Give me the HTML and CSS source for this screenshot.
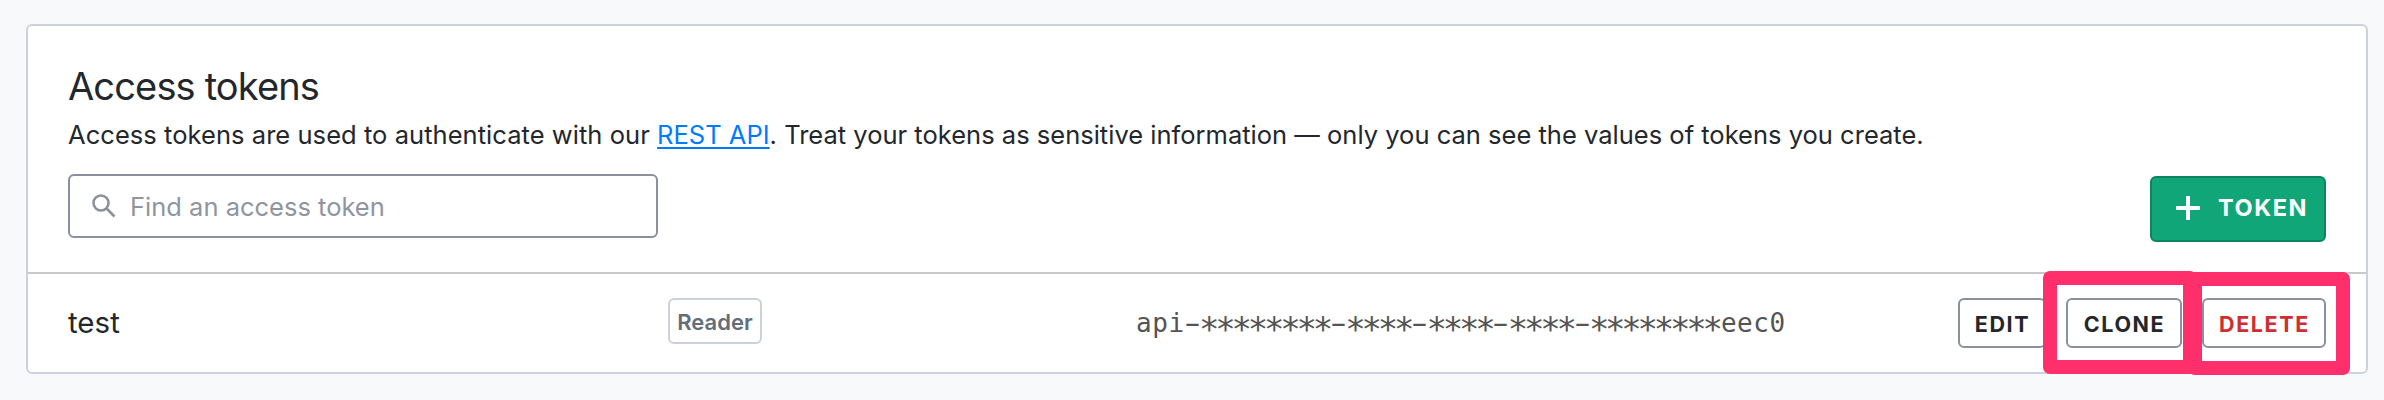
FILE: index.html
```html
<!DOCTYPE html>
<html lang="en">
<head>
<meta charset="utf-8">
<title>Access tokens</title>
<link rel="stylesheet" href="styles.css">
</head>
<body>
<main class="card">
  <section class="head">
    <h1 class="title">Access tokens</h1>
    <p class="desc"><span class="lead">Access tokens are used to authenticate with our </span><a class="link" href="#">REST API</a>. Treat your tokens as sensitive information — only you can see the values of tokens you create.</p>
    <div class="toolbar">
      <div class="search">
        <svg class="search-icon" viewBox="0 0 24 24"><circle cx="9" cy="9" r="7.5" /><path d="M14.5 14.5l8 8" /></svg>
        <span class="placeholder">Find an access token</span>
      </div>
      <button class="create">
        <svg class="plus" viewBox="0 0 24 24"><path d="M12 0v24M0 12h24" /></svg>
        <span class="create-label">TOKEN</span>
      </button>
    </div>
  </section>
  <section class="row">
    <div class="name">test</div>
    <div class="role"><span class="badge">Reader</span></div>
    <div class="value">api<span class="dash">-</span><span class="mask">********</span><span class="dash">-</span><span class="mask">****</span><span class="dash">-</span><span class="mask">****</span><span class="dash">-</span><span class="mask">****</span><span class="dash">-</span><span class="mask">********</span>eec0</div>
    <div class="actions">
      <button class="btn edit">EDIT</button>
      <div class="slot"><button class="btn clone">CLONE</button><i class="mark mark-clone"></i></div>
      <div class="slot"><button class="btn delete">DELETE</button><i class="mark mark-delete"></i></div>
    </div>
  </section>
</main>
</body>
</html>
```

FILE: styles.css
```css
* { box-sizing: border-box; }
body {
  margin: 0;
  height: 400px;
  padding: 24px 16px 26px 26px;
  background: #f7f9fb;
  color: #23272c;
  font-family: Inter, "Liberation Sans", sans-serif;
  overflow: hidden;
}
.card {
  height: 350px;
  border: 2px solid #cbd2dc;
  border-radius: 6px;
  background: #fff;
}
.head {
  height: 248px;
  padding: 36px 40px 0;
  border-bottom: 2px solid #c8c9ca;
}
.title {
  margin: 0;
  font-size: 38px;
  line-height: 48px;
  font-weight: 400;
  letter-spacing: -0.85px;
}
.desc {
  margin: 6px 0 0;
  font-size: 25.5px;
  line-height: 38px;
  letter-spacing: 0.01px;
  white-space: nowrap;
}
.lead { letter-spacing: 0.05px; }
.link {
  color: #007bff;
  text-decoration: underline;
  text-decoration-thickness: 2px;
  text-underline-offset: 3px;
  text-decoration-skip-ink: none;
}
.toolbar {
  display: flex;
  justify-content: space-between;
  align-items: flex-start;
  margin-top: 20px;
}
.search {
  display: flex;
  align-items: center;
  width: 590px;
  height: 64px;
  padding-left: 22px;
  border: 2px solid #8b909e;
  border-radius: 6px;
}
.search-icon {
  width: 24px;
  height: 24px;
  fill: none;
  stroke: #8b929c;
  stroke-width: 2.6;
}
.placeholder {
  margin-left: 14px;
  color: #8f959f;
  font-size: 25.5px;
}
.create {
  display: flex;
  align-items: center;
  width: 176px;
  height: 66px;
  margin: 2px 0 0;
  padding: 0 0 2px 24px;
  border: 2px solid #0a8560;
  border-radius: 6px;
  background: #10a678;
  color: #fff;
  font: 700 23.5px Inter, sans-serif;
  letter-spacing: 1.6px;
}
.create-label { margin-top: -2px; }
.plus {
  width: 24px;
  height: 24px;
  margin-right: 18px;
  stroke: #fff;
  stroke-width: 4;
}
.row {
  display: grid;
  grid-template-columns: 600px 468px 1fr auto;
  height: 98px;
  padding: 0 40px;
  align-items: start;
}
.name {
  padding-top: 28px;
  font-size: 29.5px;
  line-height: 40px;
}
.role { padding-top: 24px; }
.badge {
  display: flex;
  align-items: center;
  justify-content: center;
  width: 94px;
  height: 46px;
  padding-top: 2px;
  border: 2px solid #ccd1dc;
  border-radius: 6px;
  color: #646e79;
  font-size: 22px;
  font-weight: 600;
}
.value {
  padding-top: 29px;
  color: #545454;
  font-family: "DejaVu Sans Mono", monospace;
  font-size: 26px;
  line-height: 40px;
  letter-spacing: 0.58px;
  white-space: nowrap;
}
.dash {
  display: inline-block;
  line-height: 1;
  transform: scaleX(1.85);
}
.mask {
  margin: 0 2px 0 -2px;
  font-size: 34px;
  line-height: 1;
  letter-spacing: -4.22px;
  vertical-align: -9px;
}
.actions {
  display: flex;
  gap: 20px;
  padding-top: 24px;
}
.btn {
  display: block;
  height: 50px;
  margin: 0;
  padding: 2px 0 0 1px;
  border: 2px solid #8b909e;
  border-radius: 6px;
  background: #fff;
  color: #23272c;
  font: 700 21.5px Inter, sans-serif;
  letter-spacing: 1.6px;
}
.edit { width: 88px; }
.clone { width: 116px; }
.delete {
  width: 124px;
  color: #cf2d31;
}
.slot { position: relative; }
/* highlight frames drawn over the row actions */
.mark {
  position: absolute;
  height: 103px;
  border: 14px solid #ff2f6c;
  border-radius: 7px;
}
.mark-clone {
  left: -23px;
  top: -27px;
  width: 154px;
}
.mark-delete {
  left: -14px;
  top: -26px;
  width: 162px;
}
```
